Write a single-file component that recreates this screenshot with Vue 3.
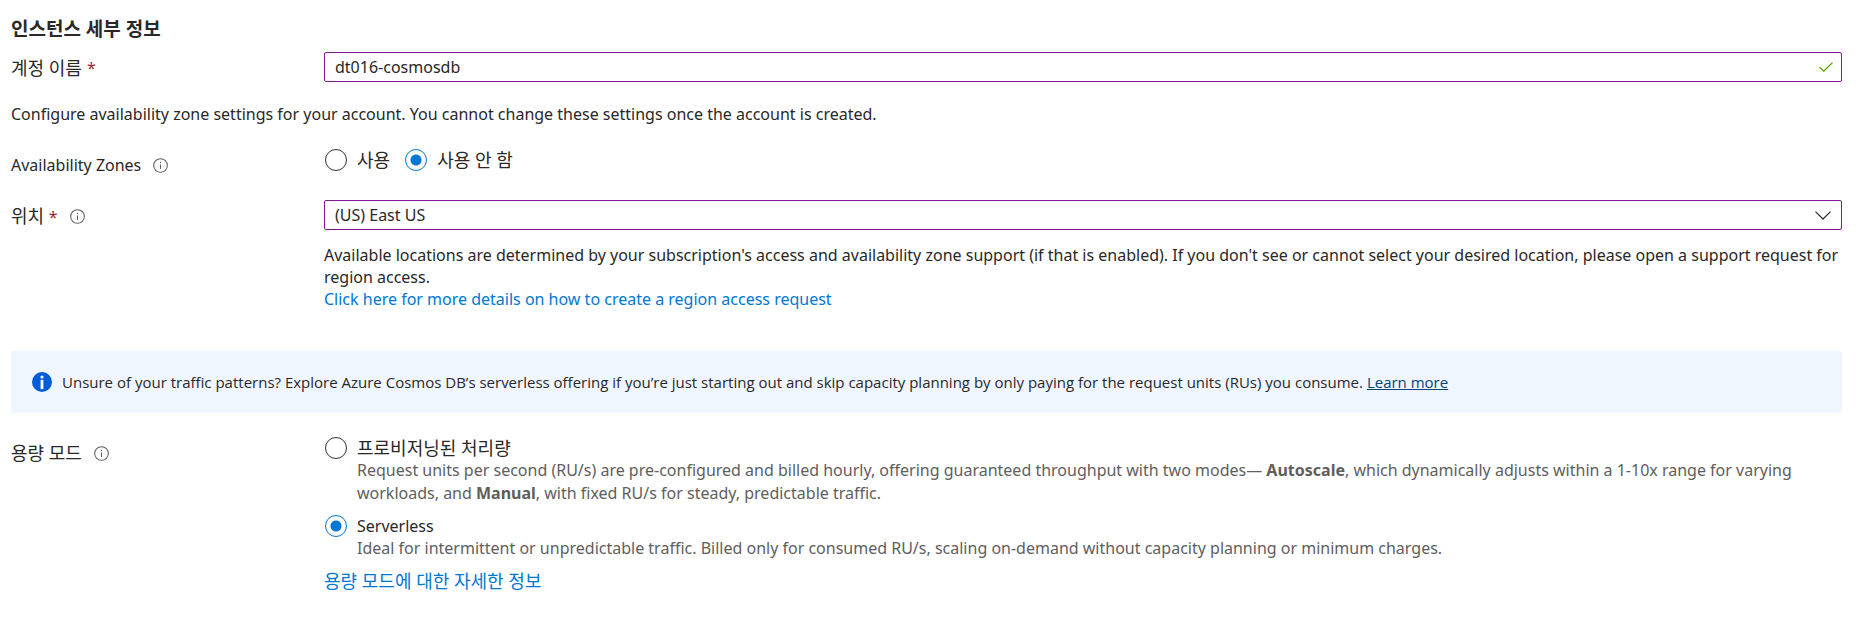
<template>
  <main class="instance-form">
    <h3 class="section-title">인스턴스 세부 정보</h3>

    <div class="form-row">
      <label class="row-label ko" for="account-name">계정 이름 <span class="required">*</span></label>
      <div class="row-field input-wrap">
        <input id="account-name" v-model="accountName" class="text-input" type="text" />
        <svg class="check-icon" viewBox="0 0 14 10" aria-hidden="true">
          <path d="M0.5 5 L4.8 9.2 L13.5 0.6" />
        </svg>
      </div>
    </div>

    <p class="intro">Configure availability zone settings for your account. You cannot change these settings once the account is created.</p>

    <div class="form-row" role="radiogroup" aria-labelledby="zones-label">
      <div class="row-label">
        <span id="zones-label">Availability Zones</span>
        <svg class="info-icon" viewBox="0 0 16 16" aria-hidden="true">
          <circle cx="8" cy="8" r="7.3" />
          <path d="M8 6.8 V11.8 M8 4.2 V5.4" />
        </svg>
      </div>
      <div class="row-field radio-list">
        <label v-for="option in zoneOptions" :key="option.value" class="radio-option ko">
          <input v-model="zone" type="radio" name="zone" :value="option.value" />
          <span>{{ option.text }}</span>
        </label>
      </div>
    </div>

    <div class="form-row location-row">
      <div class="row-label">
        <label for="location" class="ko">위치 <span class="required">*</span></label>
        <svg class="info-icon" viewBox="0 0 16 16" aria-hidden="true">
          <circle cx="8" cy="8" r="7.3" />
          <path d="M8 6.8 V11.8 M8 4.2 V5.4" />
        </svg>
      </div>
      <div class="row-field">
        <div class="input-wrap">
          <select id="location" v-model="location" class="text-input">
            <option value="eastus">(US) East US</option>
          </select>
          <svg class="chevron-icon" viewBox="0 0 16 9" aria-hidden="true">
            <path d="M0.5 0.6 L8 8 L15.5 0.6" />
          </svg>
        </div>
        <p class="location-help">
          Available locations are determined by your subscription's access and availability zone support (if that is enabled). If you don't see or cannot select your desired location, please open a support request for region access.<br />
          <a href="#" class="link">Click here for more details on how to create a region access request</a>
        </p>
      </div>
    </div>

    <div class="banner">
      <svg class="banner-icon" viewBox="0 0 20 20" aria-hidden="true">
        <circle cx="10" cy="10" r="10" fill="#015cda" />
        <circle cx="10" cy="5" r="1.6" fill="#fff" />
        <rect x="8.6" y="7.8" width="2.8" height="9.4" fill="#fff" />
      </svg>
      <p class="banner-text">
        Unsure of your traffic patterns? Explore Azure Cosmos DB’s serverless offering if you’re just starting out and skip capacity planning by only paying for the request units (RUs) you consume.
        <a href="#">Learn more</a>
      </p>
    </div>

    <div class="form-row capacity-row" role="radiogroup" aria-labelledby="capacity-label">
      <div class="row-label">
        <span id="capacity-label" class="ko">용량 모드</span>
        <svg class="info-icon" viewBox="0 0 16 16" aria-hidden="true">
          <circle cx="8" cy="8" r="7.3" />
          <path d="M8 6.8 V11.8 M8 4.2 V5.4" />
        </svg>
      </div>
      <div class="row-field capacity-list">
        <div>
          <label class="radio-option ko">
            <input v-model="capacity" type="radio" name="capacity" value="provisioned" />
            <span>프로비저닝된 처리량</span>
          </label>
          <p class="capacity-desc">
            Request units per second (RU/s) are pre-configured and billed hourly, offering guaranteed throughput with two modes— <strong>Autoscale</strong>, which dynamically adjusts within a 1-10x range for varying workloads, and <strong>Manual</strong>, with fixed RU/s for steady, predictable traffic.
          </p>
        </div>
        <div>
          <label class="radio-option">
            <input v-model="capacity" type="radio" name="capacity" value="serverless" />
            <span>Serverless</span>
          </label>
          <p class="capacity-desc">
            Ideal for intermittent or unpredictable traffic. Billed only for consumed RU/s, scaling on-demand without capacity planning or minimum charges.
          </p>
        </div>
        <a href="#" class="link ko">용량 모드에 대한 자세한 정보</a>
      </div>
    </div>
  </main>
</template>

<script setup>
import { ref } from 'vue'

const accountName = ref('dt016-cosmosdb')
const zone = ref('disabled')
const location = ref('eastus')
const capacity = ref('serverless')

const zoneOptions = [
  { value: 'enabled', text: '사용' },
  { value: 'disabled', text: '사용 안 함' }
]
</script>

<style>
body {
  margin: 0;
  background: #ffffff;
}
</style>

<style scoped>
.instance-form {
  padding: 18px 17px 24px 11px;
  font-family: 'Noto Sans', 'Noto Sans CJK KR', sans-serif;
  font-size: 16px;
  line-height: 22px;
  color: #292827;
}

.ko {
  font-size: 18px;
}

.section-title {
  margin: 0 0 12px;
  font-size: 19px;
  font-weight: 700;
  line-height: 22px;
}

.form-row {
  display: flex;
  align-items: flex-start;
}

.row-label {
  display: flex;
  flex: 0 0 313px;
  align-items: center;
  gap: 12px;
  padding-top: 5px;
}

label.row-label {
  gap: 5px;
}

.row-field {
  flex: 1;
  min-width: 0;
}

.required {
  font-size: 16px;
  color: #a4262c;
}

.input-wrap {
  position: relative;
}

.text-input {
  display: block;
  box-sizing: border-box;
  width: 100%;
  height: 30px;
  padding: 0 36px 0 10px;
  border: 1px solid #881798;
  border-radius: 2px;
  background: #ffffff;
  color: inherit;
  font: inherit;
  appearance: none;
}

.check-icon,
.chevron-icon {
  position: absolute;
  top: 10px;
  right: 9px;
  width: 14px;
  height: 10px;
  fill: none;
  stroke: #57a300;
  stroke-width: 1.3;
  pointer-events: none;
}

.chevron-icon {
  top: 11px;
  right: 11px;
  width: 16px;
  height: 9px;
  stroke: #323130;
}

.info-icon {
  width: 15px;
  height: 15px;
  fill: none;
  stroke: #605e5c;
  stroke-width: 1.1;
}

.intro {
  margin: 21px 0 24px;
}

.radio-list {
  display: flex;
  gap: 14px;
}

.radio-option {
  display: flex;
  align-items: center;
  gap: 10px;
}

.radio-option input {
  box-sizing: border-box;
  width: 22px;
  height: 22px;
  margin: 0 0 0 1px;
  border: 1px solid #323130;
  border-radius: 50%;
  background: #ffffff;
  appearance: none;
}

.radio-option input:checked {
  border-color: #0078d4;
  background: radial-gradient(circle, #0078d4 5px, #ffffff 6px);
}

.location-row {
  margin-top: 24px;
}

.location-help {
  margin: 14px 0 0;
}

.link {
  color: #0078d4;
  text-decoration: none;
}

.link:hover {
  text-decoration: underline;
}

.banner {
  display: flex;
  align-items: center;
  gap: 10px;
  margin-top: 41px;
  padding: 20px 21px;
  border-radius: 3px;
  background: #f0f6ff;
}

.banner-icon {
  flex: none;
  width: 20px;
  height: 20px;
}

.banner-text {
  margin: 0;
  font-family: 'Open Sans', 'Noto Sans', sans-serif;
  font-size: 15px;
}

.banner-text a {
  color: #004578;
}

.capacity-row {
  margin-top: 24px;
}

.capacity-list {
  display: flex;
  flex-direction: column;
  align-items: flex-start;
  gap: 10px;
}

.capacity-desc {
  margin: 0 0 0 33px;
  line-height: 23px;
  color: #605e5c;
}
</style>
